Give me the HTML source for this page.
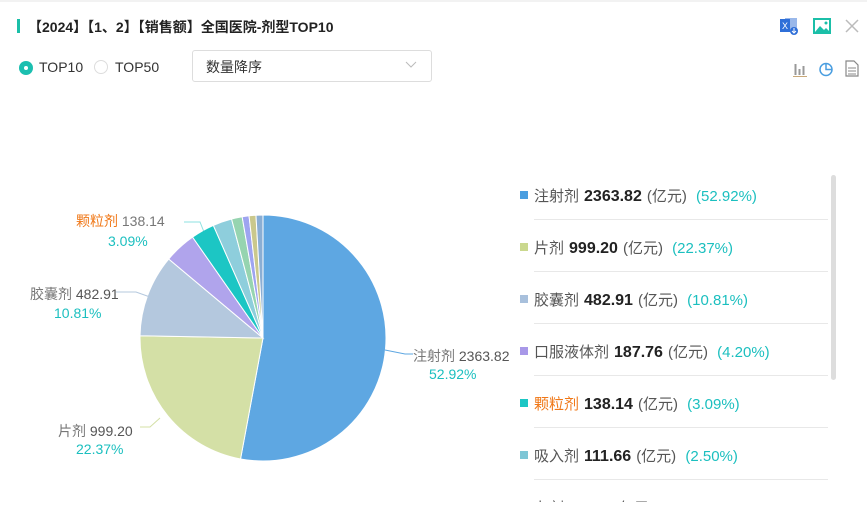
<!DOCTYPE html>
<html><head><meta charset="utf-8"><style>
body{margin:0;width:867px;height:531px;background:#fff;font-family:"Liberation Sans","Noto Sans CJK SC",sans-serif;position:relative;overflow:hidden}
.a{position:absolute;white-space:nowrap}
.leg{position:absolute;left:520px;font-size:15px;color:#555}
.leg .sq{position:absolute;left:0;top:6px;width:8px;height:8px}
.leg .t{position:absolute;left:14px;top:0;white-space:nowrap}
.leg b{color:#222;font-size:16px;margin:0 5px}
.leg .p{color:#1bbfbf;margin-left:5px}
.div{position:absolute;left:534px;width:294px;height:1px;background:#e8e8e8}
</style></head><body>
<div class="a" style="left:0;top:0;width:867px;height:2px;background:#f2f2f2"></div>
<div class="a" style="left:17px;top:19px;width:3px;height:14px;background:#1bbfa8"></div>
<div class="a" style="left:28px;top:17px;font-size:14px;font-weight:bold;color:#222">【2024】【1、2】【销售额】全国医院-剂型TOP10</div>
<svg class="a" style="left:779px;top:16px" width="20" height="20" viewBox="0 0 20 20"><rect x="6" y="2" width="12" height="14" fill="#9ab8ea"/><rect x="1" y="3" width="10" height="13" fill="#2f6fd8"/><text x="3" y="13" font-size="9" fill="#fff" font-family="Liberation Sans">X</text><circle cx="15" cy="15" r="4" fill="#2f6fd8"/><path d="M15 12v5M13 15l2 2 2-2" stroke="#fff" stroke-width="1" fill="none"/></svg>
<svg class="a" style="left:813px;top:18px" width="18" height="16" viewBox="0 0 18 16"><rect x="1" y="1" width="16" height="14" fill="none" stroke="#1bbfa8" stroke-width="2"/><path d="M2 14l5-6 4 4 2-2 4 4z" fill="#1bbfa8"/><circle cx="13" cy="5" r="1.5" fill="#1bbfa8"/></svg>
<svg class="a" style="left:845px;top:19px" width="14" height="14"><path d="M1 1L13 13M13 1L1 13" stroke="#bbb" stroke-width="1.5"/></svg>
<div class="a" style="left:19px;top:61px;width:14px;height:14px;border-radius:50%;background:#1bbfb0"></div>
<div class="a" style="left:24px;top:66px;width:4px;height:4px;border-radius:50%;background:#fff"></div>
<div class="a" style="left:39px;top:59px;font-size:14px;color:#333">TOP10</div>
<div class="a" style="left:94px;top:60px;width:14px;height:14px;border-radius:50%;border:1px solid #ddd;box-sizing:border-box"></div>
<div class="a" style="left:115px;top:59px;font-size:14px;color:#333">TOP50</div>
<div class="a" style="left:192px;top:50px;width:240px;height:32px;border:1px solid #ddd;border-radius:3px;box-sizing:border-box"></div>
<div class="a" style="left:206px;top:57px;font-size:14px;color:#333">数量降序</div>
<svg class="a" style="left:405px;top:61px" width="12" height="8"><path d="M1 1l5 5 5-5" stroke="#bbb" fill="none"/></svg>
<svg class="a" style="left:792px;top:61px" width="16" height="16"><path d="M1 15.5h14" stroke="#c8a878"/><path d="M3.5 14V3M7.5 14V8M11.5 14V5" stroke="#999" fill="none" stroke-width="2"/></svg>
<svg class="a" style="left:818px;top:61px" width="16" height="16"><circle cx="8" cy="8.5" r="6" fill="none" stroke="#4a9ee0" stroke-width="1.5"/><path d="M8 2.5V8.5h6" stroke="#4a9ee0" fill="none" stroke-width="1.5"/></svg>
<svg class="a" style="left:845px;top:60px" width="14" height="17"><path d="M1 1h8l4 4v11H1z" fill="none" stroke="#888" stroke-width="1.2"/><path d="M3 8h8M3 11h8M3 14h8" stroke="#888"/></svg>

<svg class="a" style="left:0;top:0" width="500" height="531" id="pie"></svg>
<div class="a" style="left:76px;top:211px;font-size:14px;color:#777"><span style="color:#f07818">颗粒剂</span> 138.14</div>
<div class="a" style="left:108px;top:233px;font-size:14px;color:#1bbfbf">3.09%</div>
<div class="a" style="left:30px;top:284px;font-size:14px;color:#777">胶囊剂 <span style="color:#555">482.91</span></div>
<div class="a" style="left:54px;top:305px;font-size:14px;color:#1bbfbf">10.81%</div>
<div class="a" style="left:58px;top:421px;font-size:14px;color:#777">片剂 <span style="color:#555">999.20</span></div>
<div class="a" style="left:76px;top:441px;font-size:14px;color:#1bbfbf">22.37%</div>
<div class="a" style="left:413px;top:346px;font-size:14px;color:#777">注射剂 <span style="color:#555">2363.82</span></div>
<div class="a" style="left:429px;top:366px;font-size:14px;color:#1bbfbf">52.92%</div>

<div class="a" style="left:831px;top:175px;width:5px;height:205px;border-radius:3px;background:#ddd"></div>
<div id="legend"></div>
<script>
var d=[[52.92,'#5ea7e2'],[22.37,'#d4e0a6'],[10.81,'#b4c8de'],[4.20,'#b0a4ec'],[3.09,'#1cc6c4'],[2.50,'#8ecedc'],[1.40,'#96d4b0'],[0.9,'#9ea4f0'],[0.9,'#cac88c'],[0.91,'#8aaed4']];
var cx=263,cy=338,r=123,a=-Math.PI/2,s='';
d.forEach(function(e){var b=a+e[0]/100*2*Math.PI;var x1=cx+r*Math.cos(a),y1=cy+r*Math.sin(a),x2=cx+r*Math.cos(b),y2=cy+r*Math.sin(b);
s+='<path d="M'+cx+' '+cy+'L'+x1+' '+y1+'A'+r+' '+r+' 0 '+(b-a>Math.PI?1:0)+' 1 '+x2+' '+y2+'Z" fill="'+e[1]+'" stroke="#fff" stroke-width="1"/>';a=b;});
s+='<path d="M385 350l20 4h8" stroke="#5ea7e2" fill="none"/><path d="M160 418l-10 9h-10" stroke="#d4e0a6" fill="none"/><path d="M150 297l-14 -5h-20" stroke="#b4c8de" fill="none"/><path d="M204 232l-4 -10h-16" stroke="#1cc6c4" fill="none" opacity=".5"/>';
document.getElementById('pie').innerHTML=s;
var L=[['注射剂','2363.82','52.92%','#4a9ee0'],['片剂','999.20','22.37%','#cad88e'],['胶囊剂','482.91','10.81%','#a8c0dc'],['口服液体剂','187.76','4.20%','#a898e8'],['颗粒剂','138.14','3.09%','#1cc6c4'],['吸入剂','111.66','2.50%','#7ec6d6'],['丸剂','62.67','1.40%','#8ed4a8']];
var h='';L.forEach(function(e,i){var y=185+i*52;h+='<div class="leg" style="top:'+y+'px"><div class="sq" style="background:'+e[3]+'"></div><div class="t">'+(i==4?'<span style="color:#f07818">'+e[0]+'</span>':e[0])+'<b>'+e[1]+'</b>(亿元) <span class="p">('+e[2]+')</span></div></div>';if(i<6)h+='<div class="div" style="top:'+(y+34)+'px"></div>';});
h+='<div class="a" style="left:500px;top:502px;width:367px;height:29px;background:#fff"></div>';
document.getElementById('legend').innerHTML=h;
</script>
</body></html>
